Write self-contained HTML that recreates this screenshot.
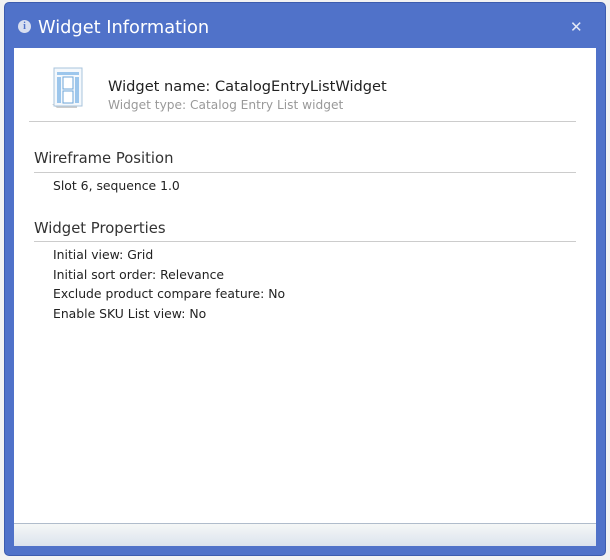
<!DOCTYPE html>
<html><head><style>
*{margin:0;padding:0;box-sizing:border-box}
body{width:610px;height:560px;background:#f2f2f2;position:relative;overflow:hidden;font-family:"DejaVu Sans","Liberation Sans",sans-serif}
.dlg{position:absolute;left:4px;top:2px;width:602px;height:554px;background:#5072c9;border-radius:5px;border:1px solid #3d5cae}
.title{position:absolute;left:38px;top:17px;color:#fff;font-size:17.8px}
.info{position:absolute;left:18px;top:20px;width:13px;height:13px;border-radius:50%;background:#d8def0;color:#5072c9;font-size:10px;font-weight:bold;text-align:center;line-height:13px;font-family:"Liberation Serif",serif}
.x{position:absolute;left:570px;top:18px;color:#e4e9f6;font-size:15px;font-weight:bold}
.body{position:absolute;left:14px;top:48px;width:582px;height:476px;background:#fff}
.foot{position:absolute;left:14px;top:523px;width:582px;height:23px;border-top:1px solid #b0bccb;background:linear-gradient(#f5f7f6,#dbe3ee)}
.t{position:absolute;white-space:nowrap}
.hr{position:absolute;height:1px;background:#ccc}
</style></head><body>
<div class="dlg"></div>
<div class="info">i</div>
<div class="title">Widget Information</div>
<div class="x">✕</div>
<div class="body">
<svg style="position:absolute;left:33px;top:18px" width="40" height="44" viewBox="0 0 40 44">
<path d="M5 38 L30 40 L30 42 L10 42 Z" fill="#ccc"/>
<rect x="7" y="2" width="28" height="38" fill="#f4f8fc" stroke="#a9c4dc"/>
<rect x="10" y="6" width="22" height="3" fill="#9cc6ec"/>
<rect x="10" y="11" width="4" height="26" fill="#9cc6ec"/>
<rect x="16" y="11" width="10" height="12" fill="#fff" stroke="#6ea6d8"/>
<rect x="16" y="25" width="10" height="12" fill="#fff" stroke="#6ea6d8"/>
<rect x="28" y="11" width="4" height="26" fill="#9cc6ec"/>
</svg>
<div class="t" style="left:94px;top:30px;font-size:14.6px;color:#222">Widget name: CatalogEntryListWidget</div>
<div class="t" style="left:94px;top:50px;font-size:12.2px;color:#999">Widget type: Catalog Entry List widget</div>
<div class="hr" style="left:15px;top:73px;width:547px"></div>
<div class="t" style="left:20px;top:102px;font-size:14.8px;color:#333">Wireframe Position</div>
<div class="hr" style="left:20px;top:124px;width:542px"></div>
<div class="t" style="left:39px;top:130px;font-size:12.4px;color:#222">Slot 6, sequence 1.0</div>
<div class="t" style="left:20px;top:172px;font-size:14.8px;color:#333">Widget Properties</div>
<div class="hr" style="left:20px;top:193px;width:542px"></div>
<div class="t" style="left:39px;top:197px;font-size:12.4px;color:#222;line-height:19.7px">Initial view: Grid<br>Initial sort order: Relevance<br>Exclude product compare feature: No<br>Enable SKU List view: No</div>
</div>
<div class="foot"></div>
</body></html>
